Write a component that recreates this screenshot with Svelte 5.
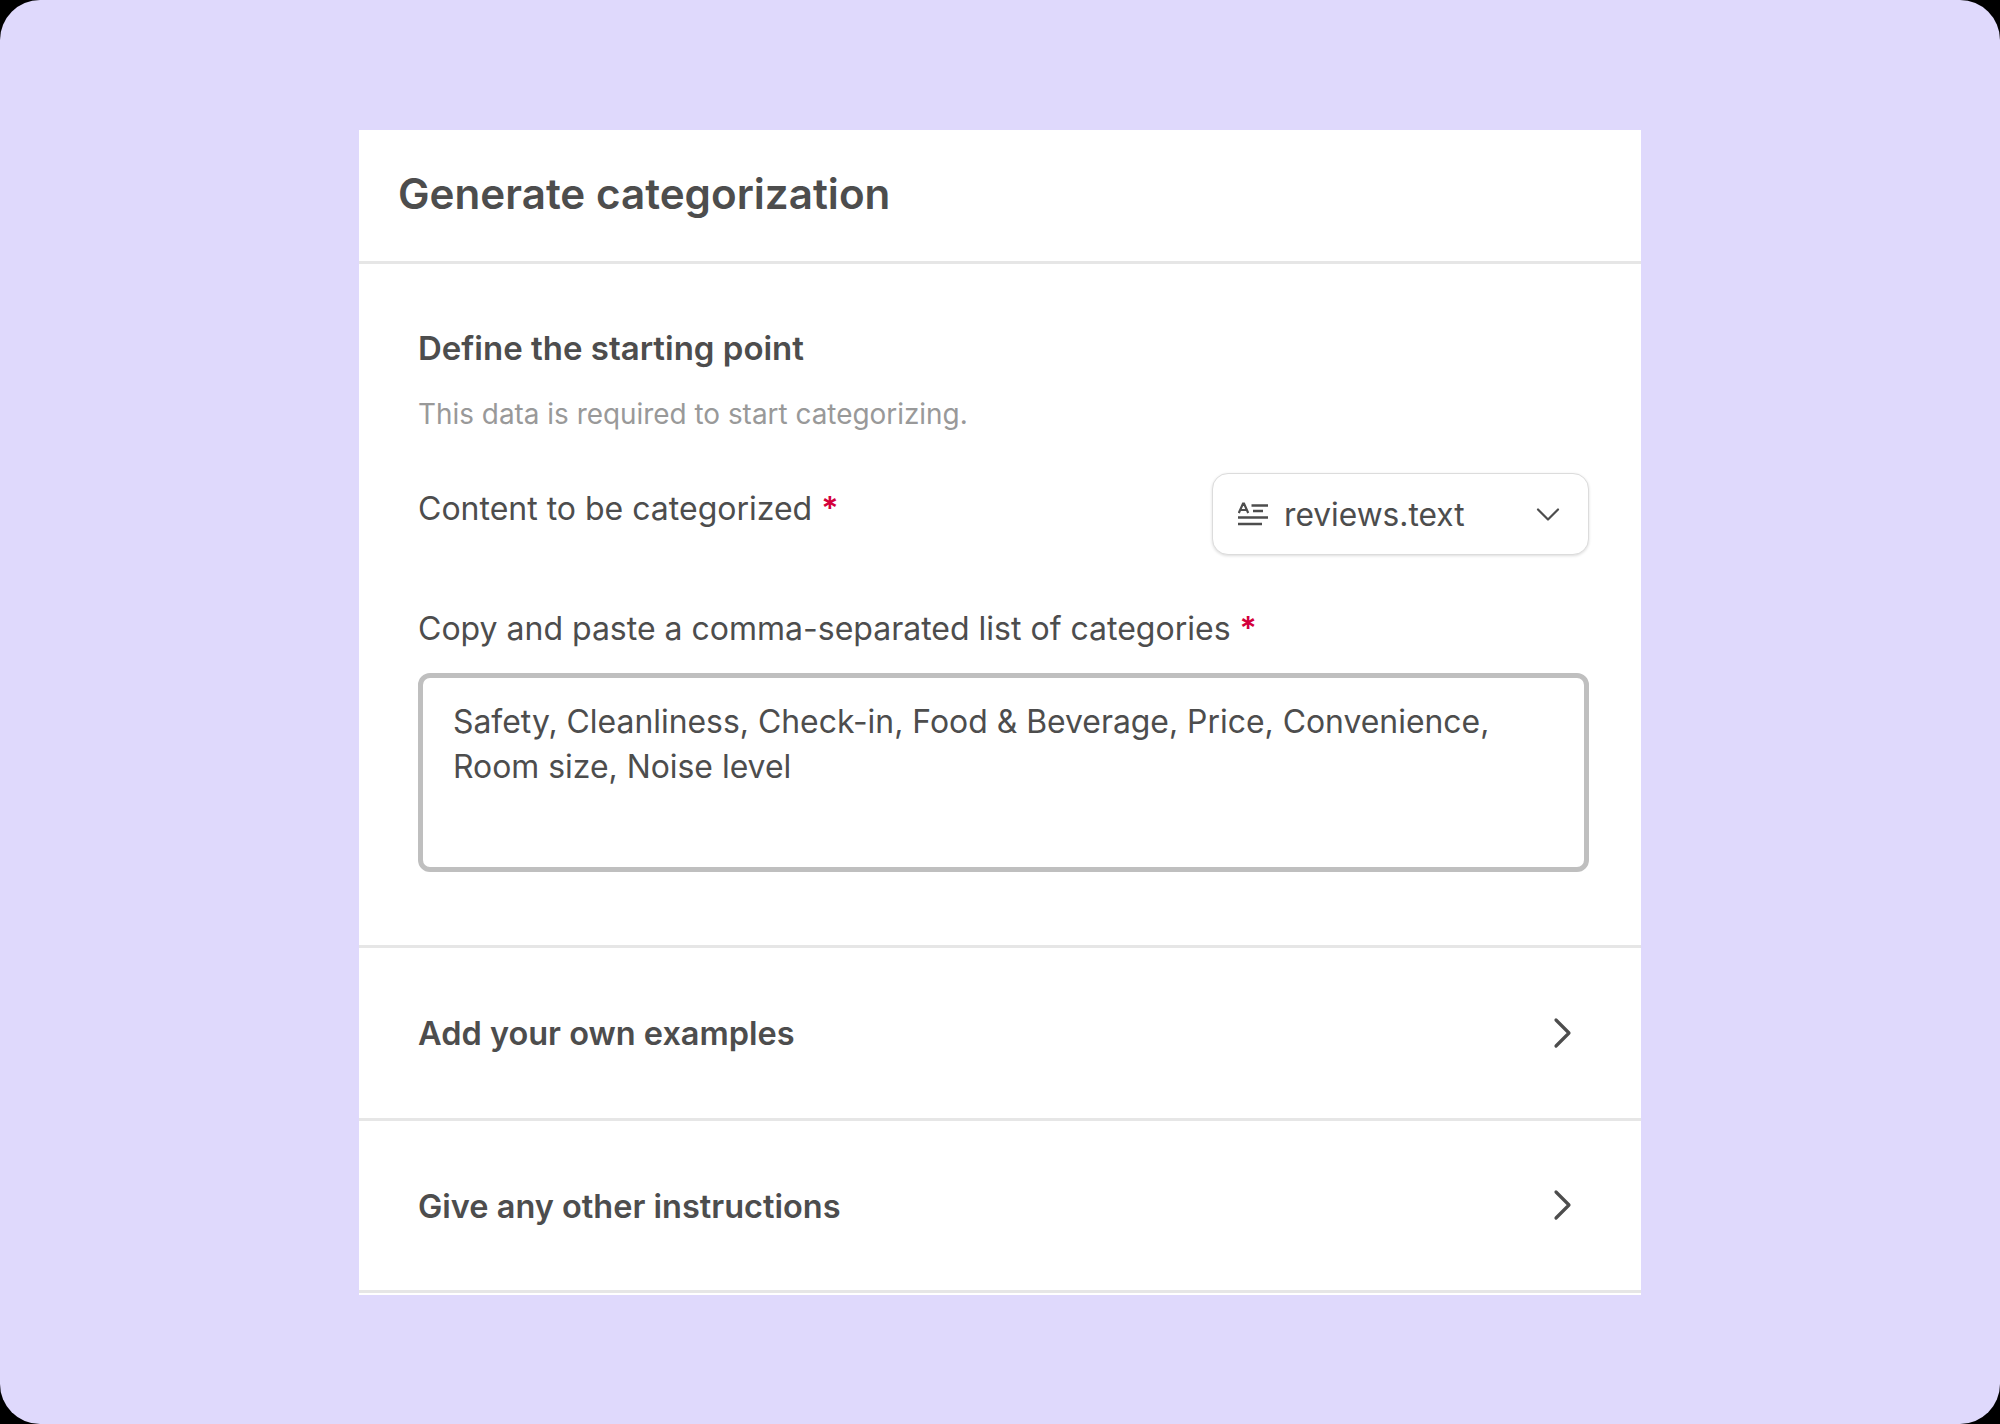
<script lang="ts">
    const rows = ["Add your own examples", "Give any other instructions"];
</script>

<div class="frame">
    <div class="card">
        <header class="top">
            <h1>Generate categorization</h1>
        </header>

        <section class="start">
            <h2>Define the starting point</h2>
            <p class="hint">This data is required to start categorizing.</p>

            <div class="field-row">
                <span class="label">Content to be categorized <span class="req">*</span></span>
                <div class="select">
                    <svg class="text-icon" width="30" height="24" viewBox="0 0 30 24" fill="none" stroke="#4d4d4d" aria-hidden="true">
                        <path d="M.8 11 5 1.5h1L10.2 11M2.5 8h6" stroke-width="2.2" />
                        <path d="M13.5 3.5H30M15 9h10M0 15.5h30M0 22h24" stroke-width="2.4" />
                    </svg>
                    <span class="value">reviews.text</span>
                    <svg class="caret" width="24" height="15" viewBox="0 0 24 15" fill="none" stroke="#4d4d4d" stroke-width="2.2" stroke-linecap="round" stroke-linejoin="round" aria-hidden="true">
                        <path d="M2 2.5 12 12.5 22 2.5" />
                    </svg>
                </div>
            </div>

            <div class="label list-label">Copy and paste a comma-separated list of categories <span class="req">*</span></div>
            <div class="area">Safety, Cleanliness, Check-in, Food &amp; Beverage, Price, Convenience, Room size, Noise level</div>
        </section>

        {#each rows as row}
            <div class="row">
                <span class="row-title">{row}</span>
                <svg width="20" height="32" viewBox="0 0 20 32" fill="none" stroke="#4d4d4d" stroke-width="3.2" stroke-linecap="round" stroke-linejoin="round" aria-hidden="true">
                    <path d="M3 3 16 16 3 29" />
                </svg>
            </div>
        {/each}
    </div>
</div>

<style>
    :global(body) {
        margin: 0;
        background: #000;
    }

    .frame {
        width: 2000px;
        height: 1424px;
        box-sizing: border-box;
        padding-top: 130px;
        display: flex;
        justify-content: center;
        align-items: flex-start;
        background: #dfd9fc;
        border-radius: 40px;
        font-family: Inter, "Liberation Sans", sans-serif;
        color: #4d4d4d;
    }

    .card {
        width: 1282px;
        padding-bottom: 2px;
        background: #fff;
    }

    .top {
        height: 131px;
        box-sizing: content-box;
        display: flex;
        align-items: center;
        padding-left: 39px;
        border-bottom: 3px solid #e6e6e6;
    }

    h1 {
        margin: 0 0 3px;
        font-size: 42.2px;
        line-height: 48px;
        font-weight: 600;
    }

    .start {
        padding: 64px 52px 73px 59px;
        border-bottom: 3px solid #e6e6e6;
    }

    h2 {
        margin: 0;
        font-size: 33px;
        line-height: 40px;
        font-weight: 600;
    }

    .hint {
        margin: 28px 0 41px;
        font-size: 27.9px;
        line-height: 36px;
        color: #999;
    }

    .field-row {
        display: flex;
        justify-content: space-between;
        align-items: flex-start;
    }

    .label {
        font-size: 32px;
        line-height: 40px;
    }

    .field-row .label {
        padding-top: 16px;
    }

    .req {
        color: #d4003c;
        font-weight: 600;
    }

    .select {
        width: 377px;
        height: 82px;
        box-sizing: border-box;
        display: flex;
        align-items: center;
        padding: 0 28px 0 25px;
        background: #fff;
        border: 1px solid #dcdcdc;
        border-radius: 16px;
        box-shadow: 0 1px 3px rgba(0, 0, 0, 0.14);
    }

    .value {
        margin-left: 16px;
        padding-top: 2px;
        font-size: 31.7px;
        line-height: 40px;
    }

    .caret {
        margin-left: auto;
    }

    .list-label {
        margin: 54px 0 24px;
    }

    .area {
        height: 199px;
        box-sizing: border-box;
        padding: 21px 30px;
        border: 5px solid #bfbfbf;
        border-radius: 12px;
        font-size: 31.9px;
        line-height: 45px;
    }

    .row {
        height: 172.5px;
        box-sizing: border-box;
        display: flex;
        justify-content: space-between;
        align-items: center;
        padding: 0 68px 0 59px;
        border-bottom: 3px solid #e6e6e6;
        font-size: 32.5px;
        font-weight: 600;
    }

    .row-title {
        padding-top: 2px;
    }
</style>
